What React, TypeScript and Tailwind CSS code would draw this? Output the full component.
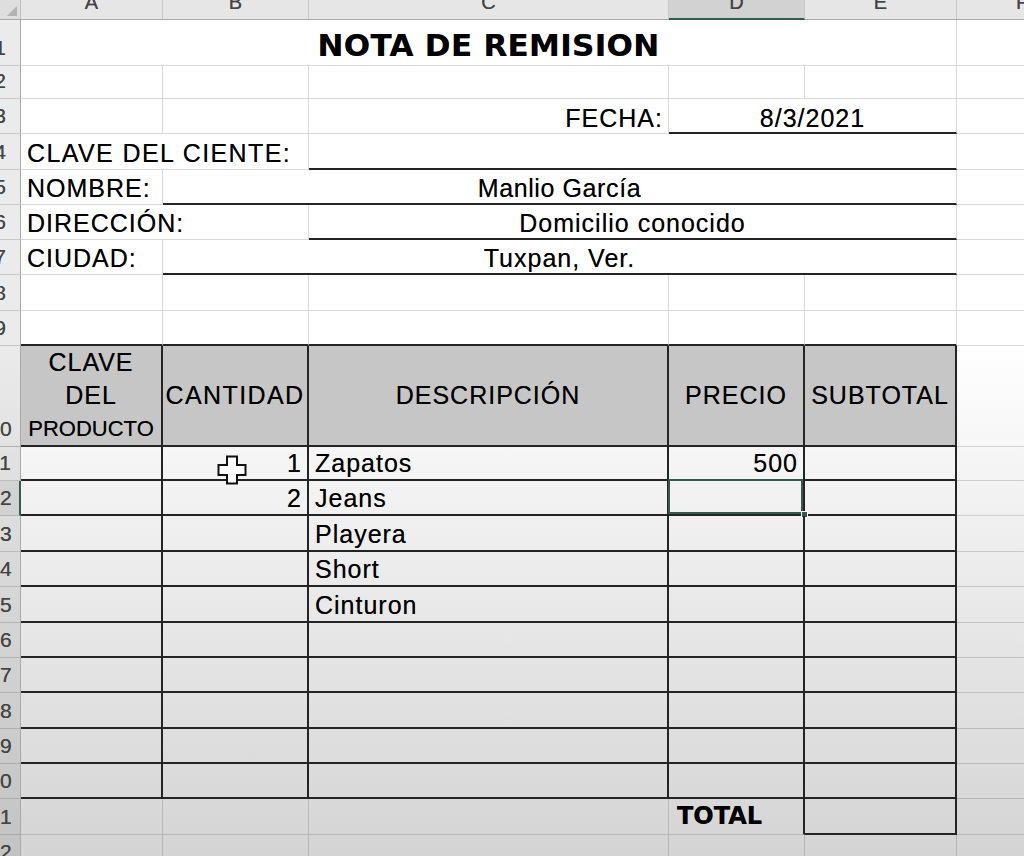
import React from "react";

type Edge = "grid" | "dark" | "none";

const RIGHT: Record<Edge, string> = {
  grid: "border-r border-r-black/15",
  dark: "border-r-2 border-r-[#242424]",
  none: "",
};
const BOTTOM: Record<Edge, string> = {
  grid: "border-b border-b-black/15",
  dark: "border-b-2 border-b-[#242424]",
  none: "",
};

const COLS = "grid grid-cols-[21px_142px_146px_360px_136px_152px_1fr]";

function Cell({
  span = "",
  r = "grid",
  b = "grid",
  align = "items-end",
  className = "",
  children,
}: {
  span?: string;
  r?: Edge;
  b?: Edge;
  align?: string;
  className?: string;
  children?: React.ReactNode;
}) {
  return (
    <div className={`${span} ${RIGHT[r]} ${BOTTOM[b]} ${align} flex min-w-0 whitespace-nowrap ${className}`}>
      {children}
    </div>
  );
}

function RowHead({ n, active = false }: { n: number; active?: boolean }) {
  return (
    <div
      className={`flex items-end overflow-hidden border-b border-b-black/15 pb-[7px] text-[21px] leading-none tracking-normal text-[#444] ${
        active ? "border-r-2 border-r-[#35584f] bg-[#d2d2d2]" : "border-r border-r-[#a9a9a9] bg-black/[0.08]"
      }`}
    >
      <span className="-ml-[20px] w-[40px] shrink-0 text-center">{n}</span>
    </div>
  );
}

const items = [
  { h: "h-[35px]", qty: "1", desc: "Zapatos", price: "500" },
  { h: "h-[35px]", qty: "2", desc: "Jeans", price: "" },
  { h: "h-[36px]", qty: "", desc: "Playera", price: "" },
  { h: "h-[35px]", qty: "", desc: "Short", price: "" },
  { h: "h-[36px]", qty: "", desc: "Cinturon", price: "" },
  { h: "h-[35px]", qty: "", desc: "", price: "" },
  { h: "h-[35px]", qty: "", desc: "", price: "" },
  { h: "h-[36px]", qty: "", desc: "", price: "" },
  { h: "h-[35px]", qty: "", desc: "", price: "" },
  { h: "h-[35px]", qty: "", desc: "", price: "" },
];

export default function App() {
  return (
    <div className="h-[856px] w-[1024px] overflow-hidden bg-linear-to-b from-white from-40% to-[#d4d4d4] font-['Liberation_Sans',Arial,sans-serif] text-[25px] leading-none tracking-[1px] text-black [text-shadow:0_0_0.6px_rgba(0,0,0,0.6)]">
      {/* column letters */}
      <div className={`${COLS} h-[20px] border-b border-b-[#a9a9a9] bg-[#e6e6e6] text-[20px] tracking-normal text-[#444]`}>
        <div className="flex items-end justify-end border-r border-r-[#bdbdbd] bg-[#dedede] p-[3px]">
          <svg width="10" height="10" viewBox="0 0 10 10">
            <polygon points="10,0 10,10 0,10" fill="#b3b3b3" />
          </svg>
        </div>
        {["A", "B", "C"].map((l) => (
          <div key={l} className="flex items-end justify-center overflow-hidden border-r border-r-[#c8c8c8] pb-[7px]">
            {l}
          </div>
        ))}
        <div className="-mb-px flex items-end justify-center overflow-hidden border-r border-b-2 border-r-[#c8c8c8] border-b-[#35584f] bg-[#d2d2d2] pb-[6px]">
          D
        </div>
        <div className="flex items-end justify-center overflow-hidden border-r border-r-[#c8c8c8] pb-[7px]">E</div>
        <div className="flex items-end overflow-hidden pb-[7px] pl-[59px]">F</div>
      </div>

      {/* row 1 */}
      <div className={`${COLS} h-[46px]`}>
        <RowHead n={1} />
        <Cell span="col-span-5" className="justify-center pb-[4px] font-['DejaVu_Sans',sans-serif] text-[31px] font-bold tracking-[0.3px]">
          NOTA DE REMISION
        </Cell>
        <Cell r="none" />
      </div>

      {/* row 2 */}
      <div className={`${COLS} h-[33px]`}>
        <RowHead n={2} />
        <Cell />
        <Cell />
        <Cell />
        <Cell />
        <Cell />
        <Cell r="none" />
      </div>

      {/* row 3 */}
      <div className={`${COLS} h-[35px]`}>
        <RowHead n={3} />
        <Cell />
        <Cell />
        <Cell className="justify-end pb-[2px] pr-[5px]">FECHA:</Cell>
        <Cell span="col-span-2" b="dark" className="justify-center pb-[1px]">
          8/3/2021
        </Cell>
        <Cell r="none" />
      </div>

      {/* row 4 */}
      <div className={`${COLS} h-[36px]`}>
        <RowHead n={4} />
        <Cell span="col-span-2" className="pb-[3px] pl-[6px] tracking-[1.4px]">
          CLAVE DEL CIENTE:
        </Cell>
        <Cell span="col-span-3" b="dark" />
        <Cell r="none" />
      </div>

      {/* row 5 */}
      <div className={`${COLS} h-[35px]`}>
        <RowHead n={5} />
        <Cell className="pb-[3px] pl-[6px]">NOMBRE:</Cell>
        <Cell span="col-span-4" b="dark" className="justify-center pb-[2px] tracking-[0.6px]">
          Manlio García
        </Cell>
        <Cell r="none" />
      </div>

      {/* row 6 */}
      <div className={`${COLS} h-[35px]`}>
        <RowHead n={6} />
        <Cell span="col-span-2" className="pb-[3px] pl-[6px]">
          DIRECCIÓN:
        </Cell>
        <Cell span="col-span-3" b="dark" className="justify-center pb-[2px]">
          Domicilio conocido
        </Cell>
        <Cell r="none" />
      </div>

      {/* row 7 */}
      <div className={`${COLS} h-[35px]`}>
        <RowHead n={7} />
        <Cell className="pb-[3px] pl-[6px]">CIUDAD:</Cell>
        <Cell span="col-span-4" b="dark" className="justify-center pb-[2px]">
          Tuxpan, Ver.
        </Cell>
        <Cell r="none" />
      </div>

      {/* rows 8 - 9 */}
      <div className={`${COLS} h-[36px]`}>
        <RowHead n={8} />
        <Cell />
        <Cell />
        <Cell />
        <Cell />
        <Cell />
        <Cell r="none" />
      </div>
      <div className={`${COLS} h-[35px]`}>
        <RowHead n={9} />
        <Cell b="dark" />
        <Cell b="dark" />
        <Cell b="dark" />
        <Cell b="dark" />
        <Cell b="dark" />
        <Cell r="none" />
      </div>

      {/* row 10: table header */}
      <div className={`${COLS} h-[100px]`}>
        <RowHead n={10} />
        <Cell r="dark" b="dark" align="items-center" className="flex-col justify-center bg-[#c6c6c6] text-center leading-[33px]">
          <span>CLAVE</span>
          <span>DEL</span>
          <span className="text-[22px] tracking-normal">PRODUCTO</span>
        </Cell>
        <Cell r="dark" b="dark" align="items-center" className="justify-center bg-[#c6c6c6] tracking-[1.4px]">
          CANTIDAD
        </Cell>
        <Cell r="dark" b="dark" align="items-center" className="justify-center bg-[#c6c6c6]">
          DESCRIPCIÓN
        </Cell>
        <Cell r="dark" b="dark" align="items-center" className="justify-center bg-[#c6c6c6]">
          PRECIO
        </Cell>
        <Cell r="dark" b="dark" align="items-center" className="justify-center bg-[#c6c6c6]">
          SUBTOTAL
        </Cell>
        <Cell r="none" />
      </div>

      {/* rows 11 - 20: items */}
      {items.map((it, i) => (
        <div key={i} className={`${COLS} ${it.h}`}>
          <RowHead n={11 + i} active={i === 1} />
          <Cell r="dark" b="dark" />
          <Cell r="dark" b="dark" className="relative justify-end pb-[3px] pr-[5px]">
            {it.qty}
            {i === 0 && (
              <svg className="absolute left-[54px] top-[9px]" width="30" height="30" viewBox="0 0 30 30">
                <polygon
                  points="10,1.5 20,1.5 20,10 28.5,10 28.5,20 20,20 20,28.5 10,28.5 10,20 1.5,20 1.5,10 10,10"
                  fill="#fff"
                  stroke="#111"
                  strokeWidth="2"
                />
              </svg>
            )}
          </Cell>
          <Cell r="dark" b="dark" className="pb-[3px] pl-[6px]">
            {it.desc}
          </Cell>
          <Cell r="dark" b="dark" className="relative justify-end pb-[3px] pr-[5px]">
            {it.price}
            {i === 1 && (
              <>
                <div className="absolute -left-[1px] -top-[2px] bottom-0 right-0 border-2 border-[#35584f]" />
                <div className="absolute -bottom-[4px] -right-[5px] h-[7px] w-[7px] border border-white bg-[#35584f]" />
              </>
            )}
          </Cell>
          <Cell r="dark" b="dark" />
          <Cell r="none" />
        </div>
      ))}

      {/* row 21: total */}
      <div className={`${COLS} h-[36px]`}>
        <RowHead n={21} />
        <Cell />
        <Cell />
        <Cell />
        <Cell r="dark" className="pb-[6px] pl-[8px] font-['DejaVu_Sans',sans-serif] text-[24px] font-bold tracking-normal">
          TOTAL
        </Cell>
        <Cell r="dark" b="dark" />
        <Cell r="none" />
      </div>

      {/* row 22 */}
      <div className={`${COLS} h-[35px]`}>
        <RowHead n={22} />
        <Cell />
        <Cell />
        <Cell />
        <Cell />
        <Cell />
        <Cell r="none" />
      </div>
    </div>
  );
}
